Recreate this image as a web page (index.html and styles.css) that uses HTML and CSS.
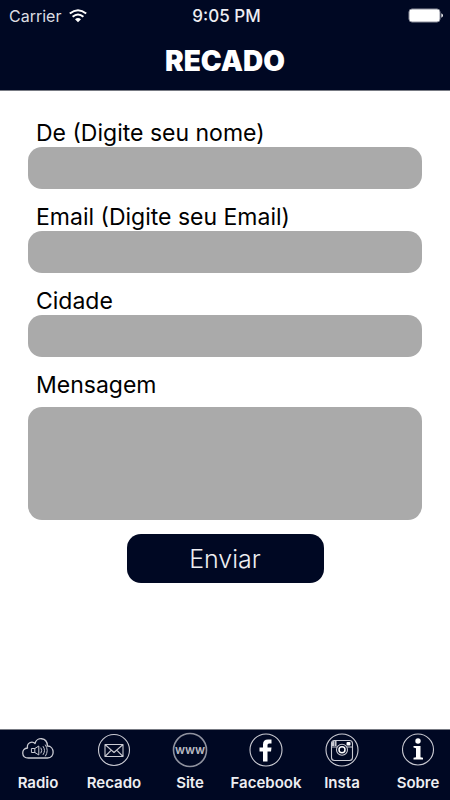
FILE: index.html
```html
<!DOCTYPE html>
<html lang="pt-BR">
<head>
<meta charset="utf-8">
<meta name="viewport" content="width=device-width, initial-scale=1">
<title>Recado</title>
<link rel="stylesheet" href="styles.css">
</head>
<body>
<header class="header">
  <div class="status">
    <div class="carrier">
      <span>Carrier</span>
      <svg width="18" height="14" viewBox="0 0 18 14" aria-hidden="true">
        <path d="M.8 4.600Q9-2.200 17.200 4.600" fill="none" stroke="#fff" stroke-width="2"/>
        <path d="M3.600 7.800Q9 3.200 14.400 7.800" fill="none" stroke="#fff" stroke-width="2"/>
        <path d="M6 10.200Q9 7.600 12 10.200L9 13.200Z" fill="#fff"/>
      </svg>
    </div>
    <span class="time">9:05 PM</span>
    <svg class="battery" width="36" height="16" viewBox="0 0 36 16" aria-hidden="true">
      <rect x="1" y="1" width="31" height="13" rx="3" fill="#fff" stroke="#8c8f9c"/>
      <path d="M33.4 5.2Q35 6 35 7.5T33.4 9.8Z" fill="#fff"/>
    </svg>
  </div>
  <h1 class="title">RECADO</h1>
</header>
<main class="content">
  <form class="form">
    <div class="field">
      <label for="nome">De (Digite seu nome)</label>
      <input id="nome" type="text">
    </div>
    <div class="field">
      <label for="email">Email (Digite seu Email)</label>
      <input id="email" type="email">
    </div>
    <div class="field">
      <label for="cidade">Cidade</label>
      <input id="cidade" type="text">
    </div>
    <div class="field">
      <label for="mensagem">Mensagem</label>
      <textarea id="mensagem"></textarea>
    </div>
    <button class="send" type="submit">Enviar</button>
  </form>
</main>
<nav class="tabs">
  <a class="tab" href="#radio">
    <svg class="icon" viewBox="0 0 36 36" aria-hidden="true">
      <g fill="none" stroke="#c9cad2" stroke-width="1.3" stroke-linecap="round" stroke-linejoin="round">
        <path d="M8.500 26C1 26 1 16.500 7.500 16C6.500 11 12 8.500 15 11.500C16.500 5 27 4.500 27.500 14C34.500 14 35.500 26 27.500 26Z"/>
        <path stroke-width="1" d="M11.800 16.500h3l4-2.500v9l-4-2.500h-3ZM14.800 16.500v4M21 16q1.600 2.500 0 5M23.200 14.500q2.800 4 0 8M25.500 13q3.600 5.500 0 11"/>
      </g>
    </svg>
    <span>Radio</span>
  </a>
  <a class="tab" href="#recado">
    <svg class="icon" viewBox="0 0 36 36" aria-hidden="true">
      <g fill="none" stroke="#c9cad2" stroke-width="1.1" stroke-linejoin="round">
        <circle cx="18" cy="18" r="15.500"/>
        <path d="M9 12.500h18v12H9ZM9 12.500l9 8 9-8M9 24.500l6.300-6.300M27 24.500l-6.300-6.300"/>
      </g>
    </svg>
    <span>Recado</span>
  </a>
  <a class="tab" href="#site">
    <svg class="icon" viewBox="0 0 36 36" aria-hidden="true">
      <circle cx="18" cy="18" r="16.500" fill="none" stroke="#8f929f" stroke-width="1.6"/>
      <text class="www" x="18" y="22" text-anchor="middle">www</text>
    </svg>
    <span>Site</span>
  </a>
  <a class="tab" href="#facebook">
    <svg class="icon" viewBox="0 0 36 36" aria-hidden="true">
      <circle cx="18" cy="18" r="16" fill="none" stroke="#c9cad2" stroke-width="1.1"/>
      <path d="M15 29.500V19.500H11.500V15.500H15V12.500Q15 7.500 20 7.500H23.500V11.500H21Q19.500 11.500 19.500 13V15.500H23.500L23 19.500H19.500V29.500Z" fill="#fff"/>
    </svg>
    <span>Facebook</span>
  </a>
  <a class="tab" href="#insta">
    <svg class="icon" viewBox="0 0 36 36" aria-hidden="true">
      <g fill="none" stroke="#c9cad2" stroke-width="1.1">
        <circle cx="18" cy="18" r="16"/>
        <rect x="7.500" y="8.500" width="21" height="20" rx="3"/>
        <path d="M7.500 15h5.500M23 15h5.500M10 9v5M12 9v5"/>
        <circle cx="18" cy="17.800" r="5.500"/>
        <circle cx="18" cy="17.800" r="3" stroke="#fff" stroke-width="1.500"/>
      </g>
      <rect x="22.500" y="10" width="4" height="3.500" rx="1" fill="#fff"/>
      <path d="M8 14V11q0-2 2-2v5ZM11 9h1v5h-1Z" fill="#c9cad2"/>
    </svg>
    <span>Insta</span>
  </a>
  <a class="tab" href="#sobre">
    <svg class="icon" viewBox="0 0 36 36" aria-hidden="true">
      <circle cx="18" cy="17.500" r="15.500" fill="none" stroke="#c9cad2" stroke-width="1.1"/>
      <circle cx="18" cy="9" r="2.700" fill="#fff"/>
      <path d="M13.500 14H20.500V25.200L23 25.800V27.500H13.500V25.800L16 25.200V16.200L13.500 15.600Z" fill="#fff"/>
    </svg>
    <span>Sobre</span>
  </a>
</nav>
</body>
</html>
```

FILE: styles.css
```css
* {
  box-sizing: border-box;
}

body {
  margin: 0;
  min-height: 100vh;
  display: flex;
  flex-direction: column;
  background: #fff;
  color: #000;
  font-family: Inter, "Liberation Sans", sans-serif;
}

.header {
  background: #000823;
  border-bottom: 1px solid #777a83;
  color: #fff;
  padding-bottom: 8px;
}

.status {
  display: grid;
  grid-template-columns: 1fr auto 1fr;
  align-items: center;
  height: 32px;
  padding: 0 6px 0 9px;
  font-size: 16px;
  line-height: 20px;
}

.carrier {
  display: flex;
  align-items: center;
  gap: 8px;
  color: #dcdde2;
}

.time {
  font-size: 17px;
  font-weight: 500;
  color: #eeeef2;
}

.battery {
  justify-self: end;
}

.title {
  margin: 0;
  padding-top: 8px;
  font-size: 28px;
  line-height: 42px;
  font-weight: 900;
  text-align: center;
}

.content {
  flex: 1;
  padding: 28px;
}

.form {
  display: flex;
  flex-direction: column;
  gap: 14px;
}

.field {
  display: flex;
  flex-direction: column;
}

.field label {
  padding-left: 8px;
  font-size: 23px;
  line-height: 28px;
}

.field input,
.field textarea {
  width: 100%;
  border: 0;
  border-radius: 14px;
  background: #aaa;
  padding: 8px 12px;
  font: inherit;
  font-size: 20px;
}

.field input {
  height: 42px;
}

.field textarea {
  display: block;
  height: 113px;
  margin-top: 8px;
  resize: none;
}

.send {
  align-self: center;
  width: 50%;
  height: 49px;
  border: 0;
  border-radius: 14px;
  background: #000823;
  color: #eeeef2;
  font: inherit;
  font-size: 25px;
  font-weight: 300;
}

.tabs {
  display: flex;
  justify-content: space-between;
  height: 71px;
  padding: 2px 0 0 6px;
  border-top: 1px solid #777a83;
  background: #000823;
}

.tab {
  display: flex;
  flex-direction: column;
  align-items: center;
  gap: 5px;
  width: 64px;
  color: #eeeef2;
  font-size: 15px;
  line-height: 20px;
  font-weight: 600;
  text-decoration: none;
}

.icon {
  width: 36px;
  height: 36px;
}

.www {
  fill: #b9bbc4;
  font-size: 12px;
  font-weight: 600;
}
```
